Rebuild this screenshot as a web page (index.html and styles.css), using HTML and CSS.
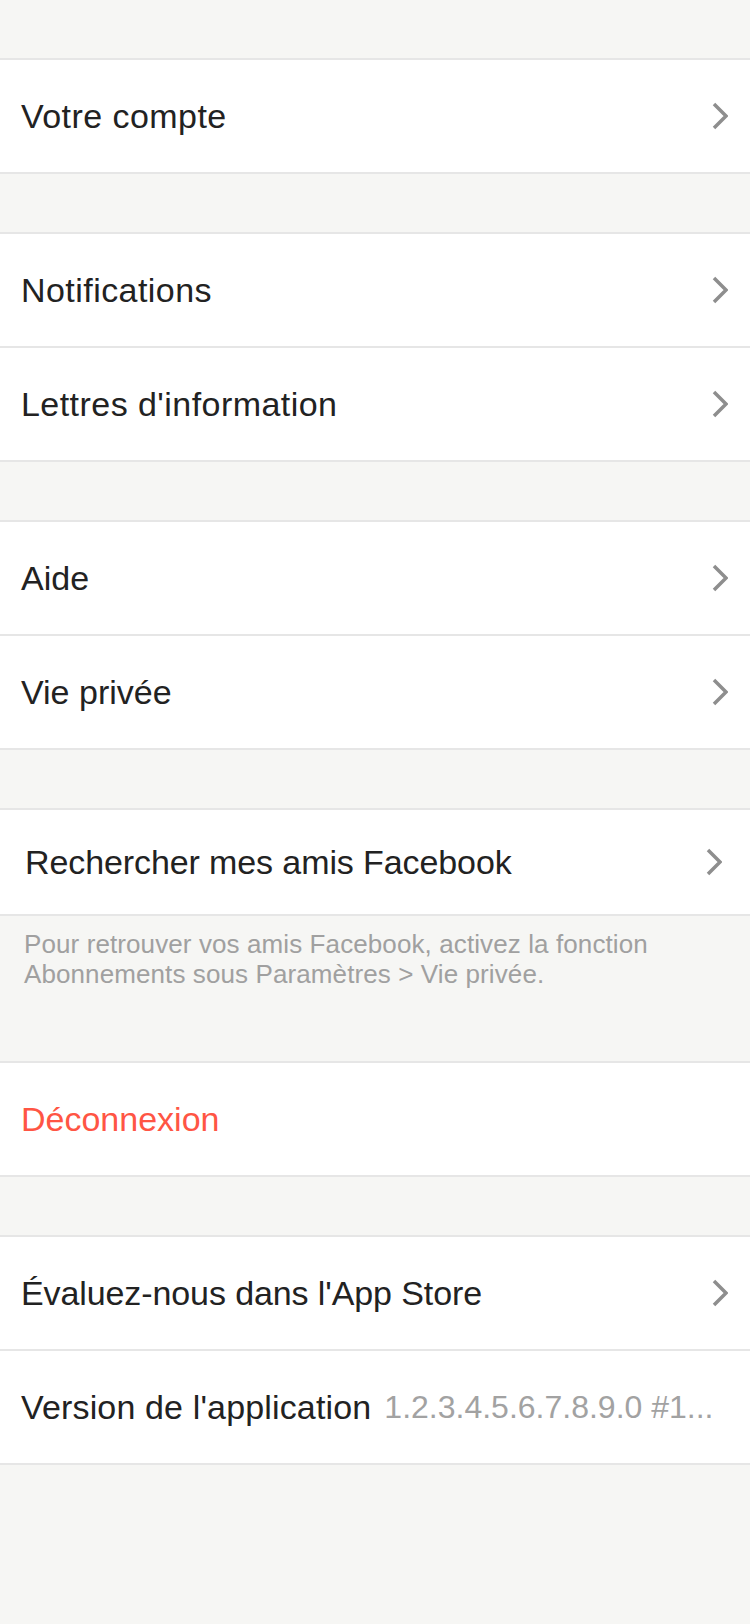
FILE: index.html
```html
<!DOCTYPE html>
<html lang="fr">
<head>
<meta charset="utf-8">
<title>Paramètres</title>
<link rel="stylesheet" href="styles.css">
</head>
<body>
<div class="page">
  <div class="group">
    <div class="row"><span class="label wide">Votre compte</span><svg class="chev" viewBox="0 0 16 28"><polyline points="2,2 14,14 2,26"/></svg></div>
  </div>
  <div class="group">
    <div class="row"><span class="label wide">Notifications</span><svg class="chev" viewBox="0 0 16 28"><polyline points="2,2 14,14 2,26"/></svg></div>
    <div class="row"><span class="label wide">Lettres d'information</span><svg class="chev" viewBox="0 0 16 28"><polyline points="2,2 14,14 2,26"/></svg></div>
  </div>
  <div class="group">
    <div class="row"><span class="label">Aide</span><svg class="chev" viewBox="0 0 16 28"><polyline points="2,2 14,14 2,26"/></svg></div>
    <div class="row"><span class="label">Vie privée</span><svg class="chev" viewBox="0 0 16 28"><polyline points="2,2 14,14 2,26"/></svg></div>
  </div>
  <div class="group">
    <div class="row row-fb"><span class="label label-fb">Rechercher mes amis Facebook</span><svg class="chev" viewBox="0 0 16 28"><polyline points="2,2 14,14 2,26"/></svg></div>
  </div>
  <p class="footer">Pour retrouver vos amis Facebook, activez la fonction<br>Abonnements sous Paramètres &gt; Vie privée.</p>
  <div class="group">
    <div class="row"><span class="label danger">Déconnexion</span></div>
  </div>
  <div class="group">
    <div class="row"><span class="label tight">Évaluez-nous dans l'App Store</span><svg class="chev" viewBox="0 0 16 28"><polyline points="2,2 14,14 2,26"/></svg></div>
    <div class="row"><span class="label label-version">Version de l'application</span><span class="value">1.2.3.4.5.6.7.8.9.0 #1...</span></div>
  </div>
</div>
</body>
</html>
```
FILE: styles.css
```css
html, body {
  margin: 0;
  padding: 0;
  background: #f6f6f4;
}
body {
  width: 750px;
  min-height: 1624px;
  font-family: "Liberation Sans", Arial, sans-serif;
  color: #222222;
}
.page {
  display: flex;
  flex-direction: column;
  gap: 58px;
  padding-top: 58px;
}
.group {
  background: #ffffff;
  border-top: 2px solid #e6e6e6;
  border-bottom: 2px solid #e6e6e6;
  display: flex;
  flex-direction: column;
}
.row {
  height: 112px;
  display: flex;
  align-items: center;
  padding: 0 22px 0 21px;
}
.row + .row {
  border-top: 2px solid #e6e6e6;
}
.label {
  font-size: 34px;
  letter-spacing: 0;
  flex: 1;
  white-space: nowrap;
}
.wide {
  letter-spacing: 0.45px;
}
.tight {
  letter-spacing: -0.1px;
}
.label-version {
  flex: none;
  letter-spacing: 0.15px;
}
.label-fb {
  letter-spacing: -0.1px;
}
.danger {
  color: #ff5544;
}
.value {
  font-size: 32px;
  color: #a2a2a2;
  white-space: nowrap;
  margin-left: 13px;
  flex: none;
}
.chev {
  width: 16px;
  height: 28px;
  flex: none;
  fill: none;
  stroke: #8e8e8e;
  stroke-width: 3.5;
}
.row-fb {
  height: 104px;
  padding: 0 28px 0 25px;
}
.footer {
  margin: -45px 0 -58px;
  padding: 0 24px 72px;
  font-size: 26px;
  line-height: 30px;
  letter-spacing: 0.1px;
  color: #a0a0a0;
  white-space: nowrap;
}
```
